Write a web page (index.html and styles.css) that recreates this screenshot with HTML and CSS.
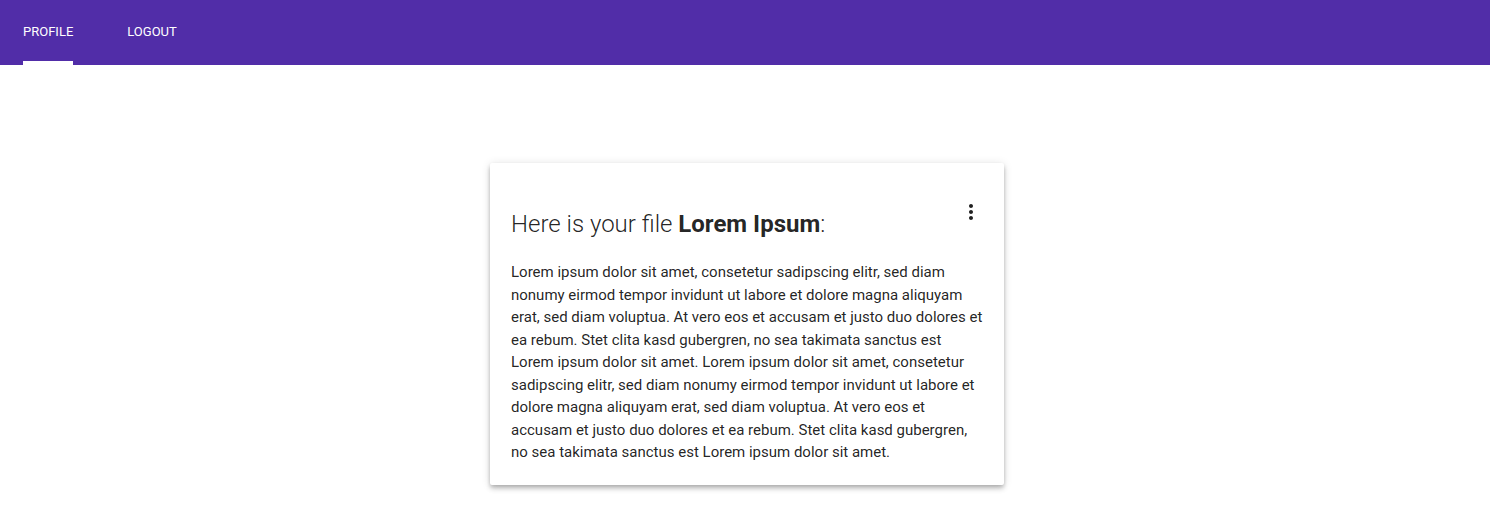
FILE: index.html
```html
<!DOCTYPE html>
<html lang="en">
<head>
<meta charset="utf-8">
<title>Profile</title>
<link rel="stylesheet" href="styles.css">
</head>
<body>
<header class="toolbar">
  <nav class="tabs">
    <a class="tab active" href="#">Profile</a>
    <a class="tab" href="#">Logout</a>
  </nav>
</header>
<main class="main">
  <section class="card">
    <div class="card-header">
      <h1 class="card-title">Here is your file <b>Lorem Ipsum</b>:</h1>
      <button class="menu-btn" aria-label="More">
        <svg width="24" height="24" viewBox="0 0 24 24"><path fill="#212121" d="M12 8c1.1 0 2-.9 2-2s-.9-2-2-2-2 .9-2 2 .9 2 2 2zm0 2c-1.1 0-2 .9-2 2s.9 2 2 2 2-.9 2-2-.9-2-2-2zm0 6c-1.1 0-2 .9-2 2s.9 2 2 2 2-.9 2-2-.9-2-2-2z"/></svg>
      </button>
    </div>
    <p class="card-text">Lorem ipsum dolor sit amet, consetetur sadipscing elitr, sed diam nonumy eirmod tempor invidunt ut labore et dolore magna aliquyam erat, sed diam voluptua. At vero eos et accusam et justo duo dolores et ea rebum. Stet clita kasd gubergren, no sea takimata sanctus est Lorem ipsum dolor sit amet. Lorem ipsum dolor sit amet, consetetur sadipscing elitr, sed diam nonumy eirmod tempor invidunt ut labore et dolore magna aliquyam erat, sed diam voluptua. At vero eos et accusam et justo duo dolores et ea rebum. Stet clita kasd gubergren, no sea takimata sanctus est Lorem ipsum dolor sit amet.</p>
  </section>
</main>
</body>
</html>
```

FILE: styles.css
```css
* { box-sizing: border-box; }
html, body { margin: 0; padding: 0; background: #fff; }
body {
  font-family: Roboto, "Liberation Sans", sans-serif;
  color: rgba(0, 0, 0, 0.87);
}
.toolbar {
  height: 65px;
  background: #512da8;
  display: flex;
  align-items: stretch;
}
.tabs {
  display: flex;
  gap: 54px;
  padding-left: 23px;
}
.tab {
  display: flex;
  align-items: center;
  padding-top: 2px;
  border-bottom: 4px solid transparent;
  color: #fff;
  text-decoration: none;
  text-transform: uppercase;
  font-size: 13px;
  letter-spacing: 0;
}
.tab.active { border-bottom-color: #fff; }
.main {
  display: flex;
  justify-content: center;
  padding-top: 98px;
  padding-left: 4px;
  padding-bottom: 40px;
}
.card {
  width: 514px;
  background: #fff;
  border-radius: 2px;
  box-shadow: 0 2px 4px -1px rgba(0,0,0,.2), 0 4px 5px 0 rgba(0,0,0,.14), 0 1px 10px 0 rgba(0,0,0,.12);
  padding: 45px 21px 21px 21px;
}
.card-header {
  display: flex;
  justify-content: space-between;
  align-items: flex-start;
}
.card-title {
  margin: 0;
  font-size: 24px;
  line-height: 32px;
  font-weight: 300;
}
.card-title b { font-weight: 700; }
.menu-btn {
  border: 0;
  background: none;
  padding: 0;
  width: 24px;
  height: 24px;
  margin-top: -8px;
  cursor: pointer;
}
.menu-btn svg { display: block; }
.card-text {
  margin: 21px 0 0;
  font-size: 15px;
  line-height: 22.5px;
}
```
